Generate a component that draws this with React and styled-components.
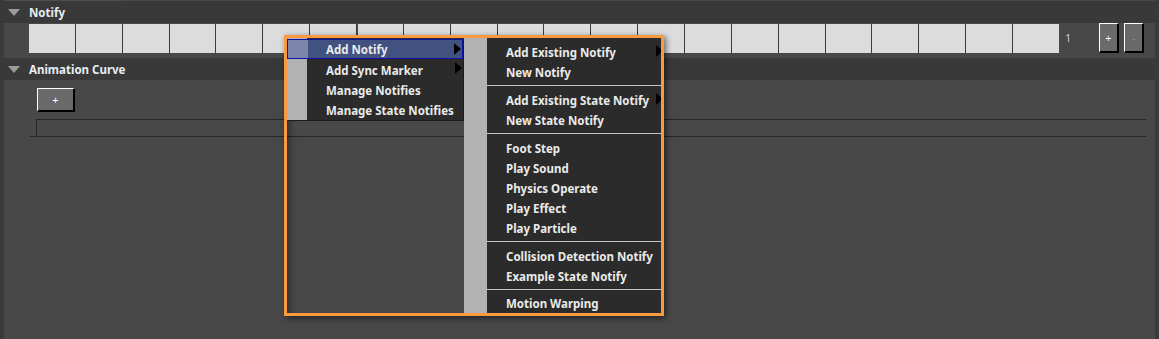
import React from "react";
import styled, { createGlobalStyle } from "styled-components";

const Global = createGlobalStyle`
  html, body { margin: 0; padding: 0; background: #484848; }
  body { font-family: "Noto Sans", "DejaVu Sans", sans-serif; }
  #root { width: 1159px; height: 339px; overflow: hidden; }
`;

const Page = styled.div`
  position: relative;
  width: 1159px;
  height: 339px;
  display: flex;
  background: #484848;
  overflow: hidden;
`;

const LeftStrip = styled.div`
  width: 4px;
  background: #3b3b3b;
`;

const Main = styled.div`
  flex: 1;
  display: flex;
  flex-direction: column;
  position: relative;
`;

const RightStrip = styled.div`
  width: 4px;
  background: #3a3a3a;
`;

const TopLine = styled.div`
  height: 1px;
  width: 118px;
  background: #4e4e4e;
`;

const Header = styled.div`
  height: 22px;
  display: flex;
  align-items: center;
  background: #393939;
  color: #e6edf5;
  font-size: 11.5px;
  font-weight: 700;
  padding-left: 4px;
  margin-left: -4px;
`;

const Caret = styled.span`
  width: 0;
  height: 0;
  border-left: 6px solid transparent;
  border-right: 6px solid transparent;
  border-top: 7px solid #9b9b9b;
  margin-left: 4px;
  margin-right: 9px;
  margin-top: 1px;
`;

const TrackRow = styled.div`
  position: relative;
  height: 35px;
  display: flex;
  align-items: flex-start;
  padding-left: 25px;
  padding-right: 11px;
`;

const Cells = styled.div`
  flex: 1;
  height: 29px;
  margin-top: 1px;
  display: flex;
  gap: 1px;
  background: #3c3c3c;
`;

const Cell = styled.div`
  flex: 1;
  background: #dcdcdc;
`;

const Count = styled.span`
  color: #c9c9c9;
  font-size: 11px;
  margin-left: 6px;
  margin-top: 7px;
  width: 34px;
`;

const ToolButton = styled.button`
  box-sizing: border-box;
  width: 20px;
  height: 30px;
  margin-left: ${(p) => (p.$first ? "0" : "5px")};
  padding: 0;
  background: #6a6a6a;
  border-style: solid;
  border-width: 1px 2px 2px 1px;
  border-color: #ffffff #000000 #000000 #ffffff;
  color: ${(p) => (p.$dim ? "#8c8c8c" : "#ffffff")};
  font-family: "Noto Sans", sans-serif;
  font-size: 11px;
  line-height: 1;
`;

const Playhead = styled.div`
  position: absolute;
  left: 353px;
  top: 0;
  width: 1px;
  height: 14px;
  background: #ff0000;
`;

const CurveArea = styled.div`
  display: flex;
  flex-direction: column;
  padding-top: 8px;
`;

const AddButton = styled.button`
  box-sizing: border-box;
  width: 38px;
  height: 24px;
  margin-left: 33px;
  padding: 0;
  background: #6a6a6a;
  border-style: solid;
  border-width: 1px 2px 2px 1px;
  border-color: #ffffff #000000 #000000 #ffffff;
  color: #ffffff;
  font-family: "Noto Sans", sans-serif;
  font-size: 11px;
`;

const CurveBox = styled.div`
  height: 16px;
  margin-top: 7px;
  margin-left: 32px;
  margin-right: 9px;
  border-top: 1px solid #262626;
  border-left: 1px solid #262626;
`;

const CurveBase = styled.div`
  height: 0;
  margin-left: 26px;
  margin-right: 9px;
  border-top: 1px solid #262626;
`;

/* overlay menus */
const Frame = styled.div`
  position: absolute;
  left: 284px;
  top: 35px;
  width: 374px;
  height: 275px;
  border: 3px solid #f89a3d;
  display: flex;
  align-items: flex-start;
  overflow: hidden;
  box-shadow: 2px 2px 6px rgba(0, 0, 0, 0.55), inset 6px 0 6px -3px rgba(0, 0, 0, 0.35);
`;

const Menu = styled.div`
  position: relative;
  display: flex;
  flex-direction: column;
  background: #2b2b2b;
  padding: ${(p) => p.$pad};
  width: ${(p) => p.$w};
  height: ${(p) => p.$h || "auto"};
  box-sizing: border-box;
  border-right: 1px solid #1c1c1c;
  border-bottom: 1px solid #1c1c1c;
  flex-shrink: 0;
`;

const Gutter = styled.div`
  position: absolute;
  left: 0;
  top: 0;
  bottom: 0;
  width: ${(p) => p.$w}px;
  background: #b2b2b2;
`;

const Item = styled.div`
  position: relative;
  box-sizing: border-box;
  height: 20px;
  display: flex;
  align-items: center;
  padding-top: 2px;
  padding-left: ${(p) => p.$indent}px;
  color: #eaeaea;
  font-size: 11.5px;
  font-weight: 700;
  white-space: nowrap;
  ${(p) =>
    p.$active &&
    `
    background: linear-gradient(to right, #7c86aa 0, #7c86aa ${p.$gut}px, #415180 ${p.$gut}px);
    border: 1px solid #1212a8;
    padding-left: ${p.$indent - 1}px;
    padding-top: 1px;
  `}
`;

const Arrow = styled.span`
  position: absolute;
  right: ${(p) => p.$r}px;
  top: 3px;
  width: 0;
  height: 0;
  border-top: 6px solid transparent;
  border-bottom: 6px solid transparent;
  border-left: 7px solid #000000;
`;

const Separator = styled.div`
  height: 8px;
  display: flex;
  align-items: center;
  padding-left: 23px;
  &::after {
    content: "";
    flex: 1;
    height: 1px;
    background: #c4c4c4;
  }
`;

const mainItems = [
  { label: "Add Notify", sub: true, active: true },
  { label: "Add Sync Marker", sub: true },
  { label: "Manage Notifies" },
  { label: "Manage State Notifies" },
];

const subItems = [
  { label: "Add Existing Notify", sub: true },
  { label: "New Notify" },
  "sep",
  { label: "Add Existing State Notify", sub: true },
  { label: "New State Notify" },
  "sep",
  { label: "Foot Step" },
  { label: "Play Sound" },
  { label: "Physics Operate" },
  { label: "Play Effect" },
  { label: "Play Particle" },
  "sep",
  { label: "Collision Detection Notify" },
  { label: "Example State Notify" },
  "sep",
  { label: "Motion Warping" },
];

export default function App() {
  return (
    <>
      <Global />
      <Page>
        <LeftStrip />
        <Main>
          <TopLine />
          <Header>
            <Caret />
            Notify
          </Header>
          <TrackRow>
            <Cells>
              {Array.from({ length: 22 }).map((_, i) => (
                <Cell key={i} />
              ))}
            </Cells>
            <Count>1</Count>
            <ToolButton $first>+</ToolButton>
            <ToolButton $dim>-</ToolButton>
            <Playhead />
          </TrackRow>
          <Header>
            <Caret />
            Animation Curve
          </Header>
          <CurveArea>
            <AddButton>+</AddButton>
            <CurveBox />
            <CurveBase />
          </CurveArea>
        </Main>
        <RightStrip />

        <Frame>
          <Menu $w="177px" $pad="1px 0 1px 0">
            <Gutter $w={20} />
            {mainItems.map((it) => (
              <Item key={it.label} $indent={39} $gut={20} $active={it.active}>
                {it.label}
                {it.sub && <Arrow $r={1} />}
              </Item>
            ))}
          </Menu>
          <Menu $w="210px" $h="276px" $pad="4px 0 0 0">
            <Gutter $w={23} />
            {subItems.map((it, i) =>
              it === "sep" ? (
                <Separator key={"s" + i} />
              ) : (
                <Item key={it.label} $indent={42} $gut={23}>
                  {it.label}
                  {it.sub && <Arrow $r={10} />}
                </Item>
              )
            )}
          </Menu>
        </Frame>
      </Page>
    </>
  );
}
